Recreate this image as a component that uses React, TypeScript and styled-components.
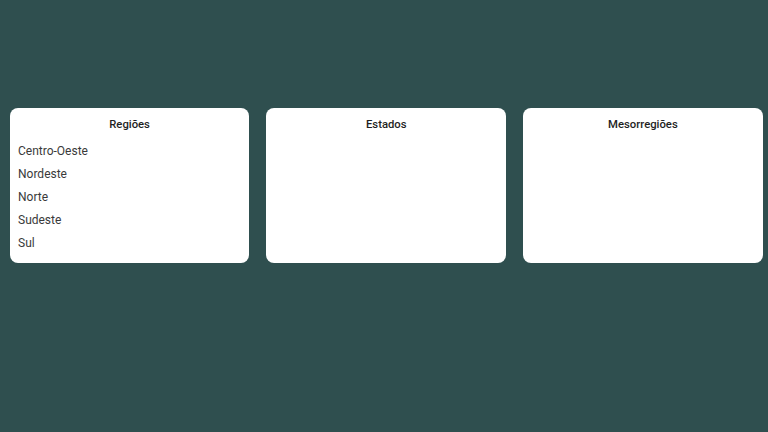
import React from "react";
import styled, { createGlobalStyle } from "styled-components";

const GlobalStyle = createGlobalStyle`
  html, body {
    margin: 0;
    padding: 0;
    background: #2f4f4f;
    font-family: Roboto, "Noto Sans", Arial, sans-serif;
  }
`;

const Page = styled.div`
  min-height: 432px;
  box-sizing: border-box;
  padding: 108px 5.5px 0 9.5px;
  display: flex;
  gap: 17px;
  align-items: flex-start;
`;

const Card = styled.section`
  flex: 1;
  height: 155px;
  box-sizing: border-box;
  background: #ffffff;
  border-radius: 8px;
  padding: 9px 8px 8px 8.5px;
  display: flex;
  flex-direction: column;
`;

const Title = styled.h2`
  margin: 0 0 7px;
  font-size: 11.3px;
  line-height: 16px;
  font-weight: 500;
  color: #1f1f1f;
  text-align: center;
`;

const List = styled.ul`
  list-style: none;
  margin: 0;
  padding: 0;
`;

const Item = styled.li`
  font-size: 12px;
  line-height: 23px;
  color: #3a3a3a;
  cursor: pointer;
`;

const panels: { title: string; items: string[] }[] = [
  { title: "Regiões", items: ["Centro-Oeste", "Nordeste", "Norte", "Sudeste", "Sul"] },
  { title: "Estados", items: [] },
  { title: "Mesorregiões", items: [] },
];

export default function App() {
  return (
    <>
      <GlobalStyle />
      <Page>
        {panels.map((p) => (
          <Card key={p.title}>
            <Title>{p.title}</Title>
            <List>
              {p.items.map((i) => (
                <Item key={i}>{i}</Item>
              ))}
            </List>
          </Card>
        ))}
      </Page>
    </>
  );
}
